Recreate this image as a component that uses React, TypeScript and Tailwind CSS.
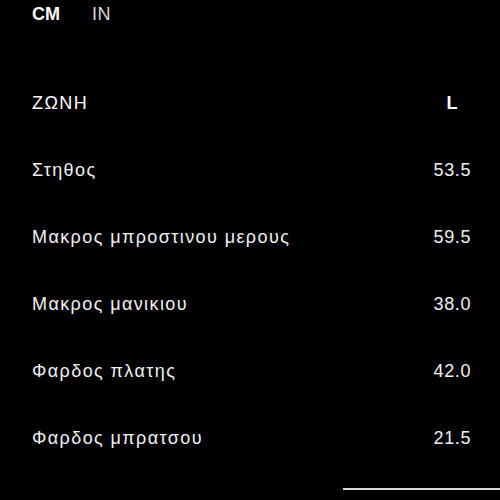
import React from "react";

const rows: [string, string][] = [
  ["Στηθος", "53.5"],
  ["Μακρος μπροστινου μερους", "59.5"],
  ["Μακρος μανικιου", "38.0"],
  ["Φαρδος πλατης", "42.0"],
  ["Φαρδος μπρατσου", "21.5"],
];

export default function App() {
  return (
    <div
      className="w-[500px] h-[500px] bg-black text-white overflow-hidden flex flex-col"
      style={{ fontFamily: '"Liberation Sans", Arial, sans-serif' }}
    >
      <div className="flex items-center gap-[32px] pl-[32px] pt-[5px] h-[24px] text-[18px]">
        <span className="font-bold">CM</span>
        <span className="text-[#d8d8d8] tracking-[0.5px]">IN</span>
      </div>
      <div className="flex flex-col pl-[32px] pr-[26px] mt-[46px]">
        <div className="flex items-center justify-between h-[67px] text-[18px]">
          <span className="tracking-[1.4px]">ΖΩΝΗ</span>
          <span className="w-[44px] text-center font-bold">L</span>
        </div>
        {rows.map(([k, v]) => (
          <div key={k} className="flex items-center justify-between h-[67px] text-[18px] text-[#f0f0f0]">
            <span className="tracking-[1.4px]">{k}</span>
            <span className="w-[44px] flex justify-center">
              <span className="tracking-[0.7px] mr-[-0.7px]">{v}</span>
            </span>
          </div>
        ))}
      </div>
      <div className="flex justify-end mt-auto mb-[10px]">
        <div className="w-[157px] h-[2px] bg-[#d8d8d8]" />
      </div>
    </div>
  );
}
